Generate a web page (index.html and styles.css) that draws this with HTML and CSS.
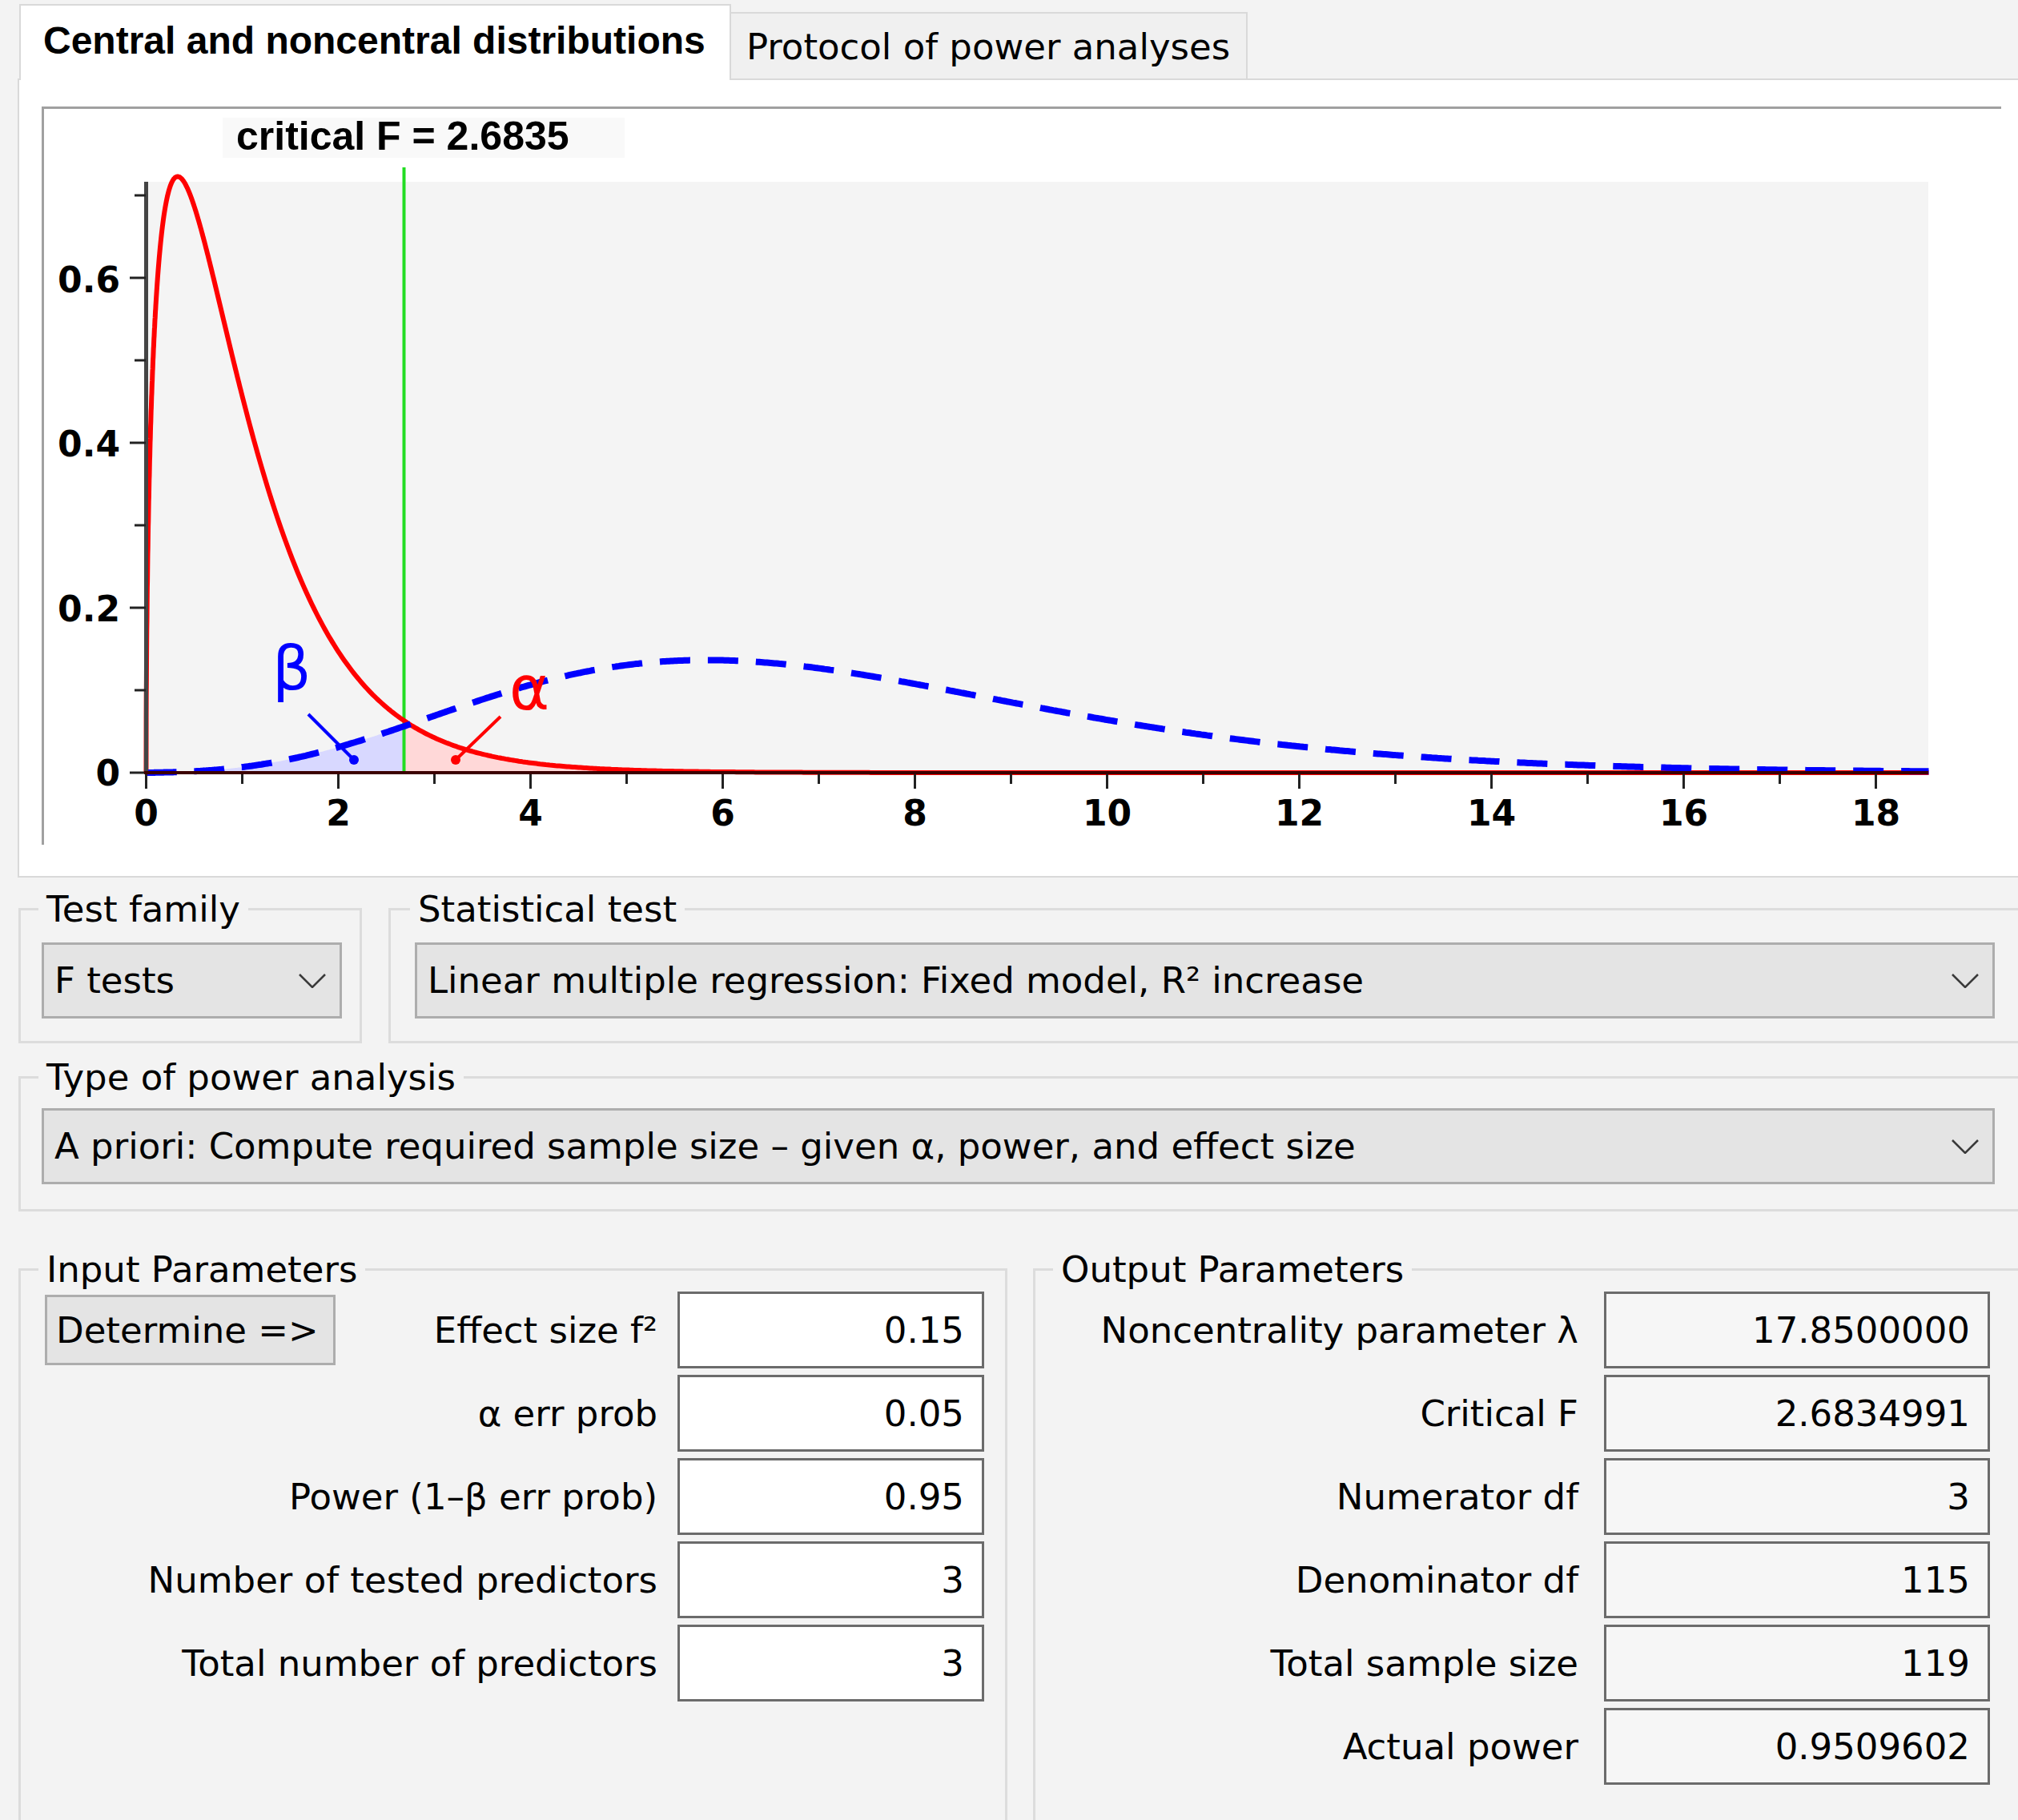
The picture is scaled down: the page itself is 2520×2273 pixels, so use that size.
FILE: index.html
```html
<!DOCTYPE html>
<html>
<head>
<meta charset="utf-8">
<title>G*Power</title>
<link rel="stylesheet" href="styles.css">
</head>
<body>
<div class="window">
  <div class="tabbar">
    <div class="tab tab-active">Central and noncentral distributions</div>
    <div class="tab tab-inactive">Protocol of power analyses</div>
    <div class="tab-fill"></div>
  </div>

  <div class="tabpanel">
    <div class="chart-frame">
      <svg class="chart" width="2444" height="919" viewBox="55 136 2444 919">
        <rect class="plot-bg" x="185" y="227" width="2223" height="738"/>
        <rect class="crit-bg" x="278" y="147" width="502" height="50"/>
        <text class="crit-label" x="295" y="187">critical F = 2.6835</text>
        <path id="beta-fill" class="beta-fill" d=""/>
        <path id="alpha-fill" class="alpha-fill" d=""/>
        <line class="crit-line" x1="504.5" y1="209" x2="504.5" y2="965"/>
        <path id="central" class="central" d=""/>
        <path id="noncentral" class="noncentral" d=""/>
        <line class="yaxis" x1="182.5" y1="227" x2="182.5" y2="967"/>
        <g id="ticks" class="ticks"></g>
        <line class="xaxis" x1="180" y1="965" x2="2408" y2="965"/>
        <g class="ylabels">
          <text x="150" y="365">0.6</text>
          <text x="150" y="570">0.4</text>
          <text x="150" y="776">0.2</text>
          <text x="150" y="981">0</text>
        </g>
        <g class="xlabels">
          <text x="182.5" y="1031">0</text>
          <text x="422.5" y="1031">2</text>
          <text x="662.5" y="1031">4</text>
          <text x="902.5" y="1031">6</text>
          <text x="1142.5" y="1031">8</text>
          <text x="1382.5" y="1031">10</text>
          <text x="1622.5" y="1031">12</text>
          <text x="1862.5" y="1031">14</text>
          <text x="2102.5" y="1031">16</text>
          <text x="2342.5" y="1031">18</text>
        </g>
        <text class="beta-label" x="340" y="861">β</text>
        <line class="beta-ptr" x1="385" y1="892" x2="442" y2="949"/>
        <circle class="beta-dot" cx="442" cy="949" r="6"/>
        <text class="alpha-label" x="636" y="886">α</text>
        <line class="alpha-ptr" x1="625" y1="895" x2="569" y2="949"/>
        <circle class="alpha-dot" cx="569" cy="949" r="6"/>
      </svg>
    </div>
  </div>

  <div class="row row-top">
    <fieldset class="group g-family">
      <legend>Test family</legend>
      <div class="combo family-combo">
        <span>F tests</span>
        <svg class="chev" width="34" height="18" viewBox="0 0 34 18"><polyline points="1,1 17,17 33,1"/></svg>
      </div>
    </fieldset>
    <fieldset class="group g-stat">
      <legend>Statistical test</legend>
      <div class="combo stat-combo">
        <span>Linear multiple regression: Fixed model, R² increase</span>
        <svg class="chev" width="34" height="18" viewBox="0 0 34 18"><polyline points="1,1 17,17 33,1"/></svg>
      </div>
    </fieldset>
  </div>

  <fieldset class="group g-type">
    <legend>Type of power analysis</legend>
    <div class="combo type-combo">
      <span>A priori: Compute required sample size – given α, power, and effect size</span>
      <svg class="chev" width="34" height="18" viewBox="0 0 34 18"><polyline points="1,1 17,17 33,1"/></svg>
    </div>
  </fieldset>

  <div class="row row-params">
    <fieldset class="group g-input">
      <legend>Input Parameters</legend>
      <div class="param-grid input-grid">
        <button class="btn">Determine =&gt;</button>
        <div class="plabel first">Effect size f²</div><div class="field">0.15</div>
        <div class="plabel">α err prob</div><div class="field">0.05</div>
        <div class="plabel">Power (1–β err prob)</div><div class="field">0.95</div>
        <div class="plabel">Number of tested predictors</div><div class="field">3</div>
        <div class="plabel">Total number of predictors</div><div class="field">3</div>
      </div>
    </fieldset>
    <fieldset class="group g-output">
      <legend>Output Parameters</legend>
      <div class="param-grid output-grid">
        <div class="olabel">Noncentrality parameter λ</div><div class="field out">17.8500000</div>
        <div class="olabel">Critical F</div><div class="field out">2.6834991</div>
        <div class="olabel">Numerator df</div><div class="field out">3</div>
        <div class="olabel">Denominator df</div><div class="field out">115</div>
        <div class="olabel">Total sample size</div><div class="field out">119</div>
        <div class="olabel">Actual power</div><div class="field out">0.9509602</div>
      </div>
    </fieldset>
  </div>
</div>
<script src="script.js"></script>
</body>
</html>
```

FILE: styles.css
```css
* { box-sizing: border-box; }
html, body { margin: 0; padding: 0; }
body {
  width: 2520px;
  height: 2273px;
  overflow: hidden;
  background: #f3f3f3;
  font-family: "DejaVu Sans", sans-serif;
  font-size: 45px;
  color: #000;
}
.window { width: 2540px; }

/* Tabs */
.tabbar {
  display: flex;
  align-items: flex-end;
  height: 98px;
  padding-left: 24px;
}
.tab { line-height: 56px; white-space: nowrap; }
.tab-active {
  position: relative;
  z-index: 1;
  width: 889px;
  height: 95px;
  margin-bottom: -2px;
  background: #fff;
  border: 2px solid #d9d9d9;
  border-bottom: none;
  padding: 16px 0 0 28px;
  font-family: "Liberation Sans", sans-serif;
  font-weight: bold;
  font-size: 48px;
}
.tab-inactive {
  width: 645px;
  height: 83px;
  background: #f0f0f0;
  border: 2px solid #d9d9d9;
  border-left: none;
  border-bottom: none;
  padding: 14px 0 0 19px;
}
.tab-fill { flex: 1; }

.tabpanel {
  margin-left: 22px;
  height: 998px;
  background: #fff;
  border: 2px solid #d9d9d9;
  border-right: none;
  padding: 33px 0 0 28px;
}
.chart-frame {
  width: 2447px;
  height: 922px;
  background: #fff;
  border-top: 3px solid #a0a0a0;
  border-left: 3px solid #a0a0a0;
}
.chart { display: block; }

/* Chart */
.plot-bg { fill: #f4f4f4; }
.crit-bg { fill: #f9f9f9; }
.crit-label {
  font-family: "Liberation Sans", sans-serif;
  font-weight: bold;
  font-size: 50px;
  fill: #000;
}
.beta-fill { fill: #d8d8ff; }
.alpha-fill { fill: #ffd8d8; }
.crit-line { stroke: #22dd22; stroke-width: 4; }
.central { fill: none; stroke: #ff0000; stroke-width: 6; stroke-linejoin: round; }
.noncentral { fill: none; stroke: #0000ff; stroke-width: 8; stroke-dasharray: 38 22; }
.yaxis { stroke: #444; stroke-width: 5; }
.xaxis { stroke: #3c0000; stroke-width: 4; }
.ticks line { stroke: #222; stroke-width: 3; }
.ylabels text, .xlabels text {
  font-family: "DejaVu Sans", sans-serif;
  font-weight: bold;
  font-size: 44px;
  fill: #000;
}
.ylabels text { text-anchor: end; }
.xlabels text { text-anchor: middle; }
.beta-label { font-family: "DejaVu Sans", sans-serif; font-size: 76px; fill: #0000ff; }
.alpha-label { font-family: "DejaVu Sans", sans-serif; font-size: 76px; fill: #ff0000; }
.beta-ptr { stroke: #0000ff; stroke-width: 4; }
.beta-dot { fill: #0000ff; }
.alpha-ptr { stroke: #ff0000; stroke-width: 4; }
.alpha-dot { fill: #ff0000; }

/* Group boxes */
.row { display: flex; }
.row-top { margin-top: 17px; }
.group {
  margin: 0;
  padding: 0;
  min-width: 0;
  border: 3px solid #dcdcdc;
}
.group > legend {
  margin-left: 22px;
  padding: 0 10px;
  line-height: 45px;
  font-size: 45px;
  white-space: nowrap;
}
.g-family { margin-left: 23px; width: 429px; flex: none; }
.g-stat { margin-left: 33px; flex: 1; }
.g-stat > legend { margin-left: 24px; }
.g-type { margin: 20px 0 0 23px; }

.combo {
  height: 95px;
  background: #e4e4e4;
  border: 3px solid #adadad;
  display: flex;
  align-items: center;
  justify-content: space-between;
  padding: 0 17px 0 13px;
  white-space: nowrap;
}
.family-combo { margin: 19px 22px 28px 26px; }
.stat-combo { margin: 19px 46px 28px 30px; }
.type-combo { margin: 16px 46px 31px 26px; }
.chev { flex: none; }
.chev polyline { fill: none; stroke: #3a3a3a; stroke-width: 2.5; }

/* Parameters */
.row-params { margin-top: 50px; }
.g-input { margin-left: 23px; width: 1235px; flex: none; height: 900px; }
.g-output { margin-left: 32px; flex: 1; height: 900px; }
.param-grid {
  display: grid;
  grid-auto-rows: 96px;
  row-gap: 8px;
  align-items: center;
}
.input-grid {
  grid-template-columns: 363px minmax(0, 1fr) 383px;
  margin: 5px 26px 0 30px;
}
.output-grid {
  grid-template-columns: minmax(0, 1fr) 482px;
  margin: 5px 52px 0 20px;
}
.btn {
  grid-column: 1;
  grid-row: 1;
  align-self: start;
  margin-top: 4px;
  height: 88px;
  background: #e4e4e4;
  border: 3px solid #adadad;
  font: inherit;
  color: #000;
  text-align: left;
  padding: 0 0 0 11px;
  white-space: nowrap;
}
.plabel, .olabel {
  text-align: right;
  line-height: 1;
  white-space: nowrap;
}
.plabel { grid-column: 1 / 3; padding-right: 25px; }
.plabel.first { grid-column: 2; }
.olabel { grid-column: 1; padding-right: 32px; }
.field {
  height: 96px;
  border: 3px solid #6b6b6b;
  background: #fff;
  display: flex;
  align-items: center;
  justify-content: flex-end;
  padding-right: 22px;
}
.input-grid .field { grid-column: 3; }
.output-grid .field { grid-column: 2; }
.field.out { background: #f6f6f6; }
```

FILE: script.js
```js
(function () {
  var LC = [0.99999999999980993, 676.5203681218851, -1259.1392167224028,
    771.32342877765313, -176.61502916214059, 12.507343278686905,
    -0.13857109526572012, 9.9843695780195716e-6, 1.5056327351493116e-7];
  function lgamma(x) {
    if (x < 0.5) return Math.log(Math.PI / Math.sin(Math.PI * x)) - lgamma(1 - x);
    x -= 1;
    var a = LC[0], t = x + 7.5;
    for (var i = 1; i < 9; i++) a += LC[i] / (x + i);
    return 0.5 * Math.log(2 * Math.PI) + (x + 0.5) * Math.log(t) - t + Math.log(a);
  }
  function fpdf(x, d1, d2) {
    if (x <= 0) return 0;
    var lb = lgamma(d1 / 2) + lgamma(d2 / 2) - lgamma((d1 + d2) / 2);
    var l = (d1 / 2) * Math.log(d1 / d2) + (d1 / 2 - 1) * Math.log(x)
      - ((d1 + d2) / 2) * Math.log(1 + d1 * x / d2) - lb;
    return Math.exp(l);
  }
  function ncfpdf(x, d1, d2, lam) {
    if (x <= 0) return 0;
    var s = 0, h = lam / 2;
    for (var k = 0; k < 120; k++) {
      var lw = -h + k * Math.log(h) - lgamma(k + 1);
      var d = d1 + 2 * k;
      s += Math.exp(lw) * (d1 / d) * fpdf(x * d1 / d, d, d2);
    }
    return s;
  }
  var X0 = 182.5, SX = 120, Y0 = 965, SY = 1030, XMAX = 18.55, CRIT = 2.6835;
  function px(x) { return X0 + SX * x; }
  function py(y) { return Y0 - SY * y; }
  function xs(a, b) {
    var arr = [], x = a;
    while (x < b) {
      arr.push(x);
      x += x < 0.1 ? 0.001 : (x < 1 ? 0.005 : 0.02);
    }
    arr.push(b);
    return arr;
  }
  function pts(f, a, b) {
    return xs(a, b).map(function (x) {
      return px(x).toFixed(1) + ',' + py(f(x)).toFixed(1);
    }).join(' L');
  }
  var cen = function (x) { return fpdf(x, 3, 115); };
  var non = function (x) { return ncfpdf(x, 3, 115, 17.85); };

  document.getElementById('central').setAttribute('d', 'M' + pts(cen, 0, XMAX));
  document.getElementById('noncentral').setAttribute('d', 'M' + pts(non, 0, XMAX));
  document.getElementById('beta-fill').setAttribute('d',
    'M' + px(0) + ',' + Y0 + ' L' + pts(non, 0, CRIT) + ' L' + px(CRIT) + ',' + Y0 + ' Z');
  document.getElementById('alpha-fill').setAttribute('d',
    'M' + px(CRIT) + ',' + Y0 + ' L' + pts(cen, CRIT, XMAX) + ' L' + px(XMAX) + ',' + Y0 + ' Z');

  var NS = 'http://www.w3.org/2000/svg';
  var g = document.getElementById('ticks');
  function line(x1, y1, x2, y2) {
    var l = document.createElementNS(NS, 'line');
    l.setAttribute('x1', x1); l.setAttribute('y1', y1);
    l.setAttribute('x2', x2); l.setAttribute('y2', y2);
    g.appendChild(l);
  }
  for (var i = 0; i <= 18; i++) {
    var x = px(i);
    line(x, Y0, x, Y0 + (i % 2 === 0 ? 20 : 14));
  }
  for (var j = 0; j <= 7; j++) {
    var y = py(j / 10);
    line(j % 2 === 0 ? 162 : 168, y, 182, y);
  }
})();
```
